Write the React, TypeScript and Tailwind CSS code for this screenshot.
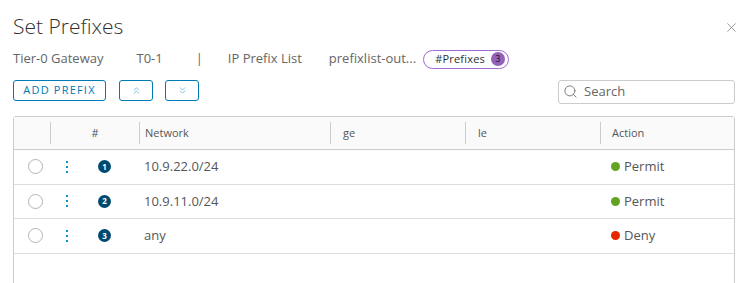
import { Search, X, ChevronsUp, ChevronsDown } from 'lucide-react';

type Row = { n: number; network: string; action: 'Permit' | 'Deny' };

const rows: Row[] = [
  { n: 1, network: '10.9.22.0/24', action: 'Permit' },
  { n: 2, network: '10.9.11.0/24', action: 'Permit' },
  { n: 3, network: 'any', action: 'Deny' },
];

const cols = 'grid grid-cols-[36px_89px_191px_135px_135px_1fr]';

function HeaderCell({ children, sep = true, center = false }: { children?: React.ReactNode; sep?: boolean; center?: boolean }) {
  return (
    <div className={`flex items-center self-center h-[22px] ${center ? 'justify-center' : 'pl-[5px]'} ${sep ? 'border-l border-[#cccccc]' : ''}`}>
      {children}
    </div>
  );
}

export default function App() {
  return (
    <div className="w-[750px] h-[283px] bg-white overflow-hidden font-['Open_Sans',sans-serif] text-[#565656]">
      {/* title */}
      <div className="flex items-start justify-between pl-[13px] pr-[11px] pt-[13px]">
        <h1 className="text-[21px] font-light text-[#313131] leading-[26px]">Set Prefixes</h1>
        <X className="w-[15px] h-[15px] mt-[7px] text-[#8c8c8c]" strokeWidth={1.4} />
      </div>

      {/* breadcrumb */}
      <div className="flex items-center pl-[13px] mt-[9px] h-[22px] text-[13px] text-[#666666]">
        <span>Tier-0 Gateway</span>
        <span className="ml-[33px]">T0-1</span>
        <span className="ml-[33px]">|</span>
        <span className="ml-[25px]">IP Prefix List</span>
        <span className="ml-[27px]">prefixlist-out...</span>
        <span className="ml-[7px] flex items-center h-[19px] pl-[11px] pr-[3px] rounded-full border-[1.5px] border-[#a36ad4] text-[11px] tracking-[0.2px] text-[#313131]">
          #Prefixes
          <span className="ml-[6px] w-[14px] h-[14px] rounded-full bg-[#9460b8] text-[9px] text-[#1a1a1a] flex items-center justify-center">3</span>
        </span>
      </div>

      {/* toolbar */}
      <div className="flex items-center pl-[13px] pr-[15px] mt-[7px] h-[26px]">
        <button className="h-[21px] w-[93px] rounded-[3px] border border-[#0079b8] text-[#0079b8] text-[11px] tracking-[1.2px]">ADD PREFIX</button>
        <button className="ml-[13px] h-[21px] w-[34px] rounded-[3px] border border-[#0079b8] flex items-center justify-center">
          <ChevronsUp className="w-[11px] h-[11px] text-[#49a3d1]" strokeWidth={1.5} />
        </button>
        <button className="ml-[12px] h-[21px] w-[34px] rounded-[3px] border border-[#0079b8] flex items-center justify-center">
          <ChevronsDown className="w-[11px] h-[11px] text-[#49a3d1]" strokeWidth={1.5} />
        </button>
        <div className="ml-auto mt-[3px] w-[177px] h-[24px] rounded-[3px] border border-[#cccccc] flex items-center pl-[4px]">
          <Search className="w-[15px] h-[15px] text-[#747474]" strokeWidth={1.5} />
          <span className="ml-[6px] text-[13px] text-[#666666]">Search</span>
        </div>
      </div>

      {/* table */}
      <div className="mx-[13px] mt-[13px] w-[722px] border border-[#cccccc] rounded-t-[3px] h-[200px]">
        <div className={`${cols} h-[33px] bg-[#fafafa] border-b border-[#cccccc] text-[11px] text-[#565656]`}>
          <HeaderCell sep={false} />
          <HeaderCell center>#</HeaderCell>
          <HeaderCell>Network</HeaderCell>
          <HeaderCell><span className="pl-[7px]">ge</span></HeaderCell>
          <HeaderCell><span className="pl-[7px]">le</span></HeaderCell>
          <HeaderCell><span className="pl-[6px]">Action</span></HeaderCell>
        </div>
        {rows.map((r) => (
          <div key={r.n} className={`${cols} h-[34.5px] border-b border-[#dddddd] items-center text-[13px] text-[#565656]`}>
            <div className="flex justify-center pl-[6px]">
              <span className="w-[15px] h-[15px] rounded-full border border-[#b3b3b3] bg-white" />
            </div>
            <div className="flex items-center pl-[16px]">
              <span className="flex flex-col gap-[3px]">
                <span className="w-[2px] h-[2px] bg-[#0095d3]" />
                <span className="w-[2px] h-[2px] bg-[#0095d3]" />
                <span className="w-[2px] h-[2px] bg-[#0095d3]" />
              </span>
              <span className="ml-[30px] w-[13px] h-[13px] rounded-full bg-[#004a70] text-white text-[8px] font-bold flex items-center justify-center">{r.n}</span>
            </div>
            <div className="pl-[5px]">{r.network}</div>
            <div />
            <div />
            <div className="flex items-center pl-[11px]">
              <span className={`w-[9px] h-[9px] rounded-full ${r.action === 'Permit' ? 'bg-[#62a420]' : 'bg-[#e62700]'}`} />
              <span className="ml-[4px]">{r.action}</span>
            </div>
          </div>
        ))}
      </div>
    </div>
  );
}
